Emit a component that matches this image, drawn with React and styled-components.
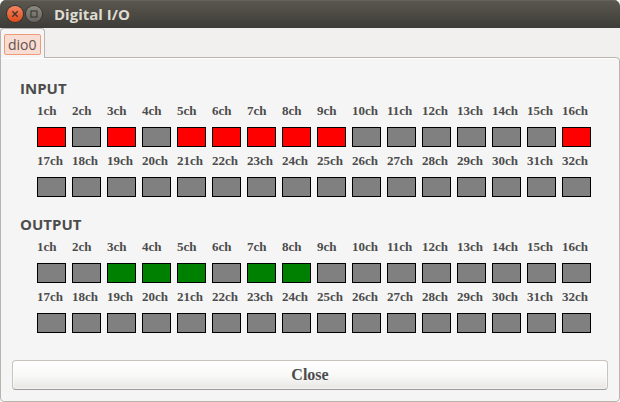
import React, { useState } from "react";
import styled, { createGlobalStyle } from "styled-components";

const GlobalStyle = createGlobalStyle`
  * { box-sizing: border-box; }
  body {
    margin: 0;
    background: #ffffff;
    color: #4c4c4c;
    font-family: "Open Sans", "Noto Sans", sans-serif;
  }
`;

const Window = styled.div`
  display: flex;
  flex-direction: column;
  min-height: 100vh;
  background: #f1f0ee;
  border-radius: 6px 6px 4px 4px;
  overflow: hidden;
`;

const TitleBar = styled.header`
  display: flex;
  align-items: center;
  gap: 3px;
  height: 28px;
  padding: 0 7px;
  background: linear-gradient(#5b584f, #3d3c38);
  box-shadow: inset 0 1px #656259;
`;

const WindowButton = styled.button`
  display: flex;
  width: 16px;
  height: 16px;
  padding: 0;
  border: 0;
  border-radius: 50%;
  background: ${(p) =>
    p.$kind === "close"
      ? "linear-gradient(#f58462, #df4b1a)"
      : "linear-gradient(#8b897f, #66645d)"};
  box-shadow: 0 0 0 1px #363530;
`;

const Title = styled.h1`
  margin: 0 0 0 9px;
  color: #dfdbd2;
  font-size: 15px;
  line-height: 20px;
  font-weight: 700;
`;

const TabStrip = styled.div`
  position: relative;
  z-index: 1;
  display: flex;
  margin-bottom: -1px;
`;

const Tab = styled.button`
  height: 30px;
  padding: 4px 3px 3px;
  border: 1px solid #b9b4ae;
  border-bottom: 0;
  border-radius: 4px 4px 0 0;
  background: #f5f5f5;
  color: #67504a;
  font: inherit;
`;

const TabLabel = styled.span`
  display: block;
  padding: 0 3px;
  border: 1px solid #f19a78;
  border-radius: 2px;
  background: #f7ddd3;
  font-size: 14px;
  line-height: 19px;
`;

const Panel = styled.main`
  flex: 1;
  display: flex;
  flex-direction: column;
  padding: 20px 11px 11px;
  border: 1px solid #b9b4ae;
  border-radius: 0 4px 4px 4px;
  background: #f5f5f5;
  box-shadow: inset 0 1px #ffffff;
`;

const Group = styled.section`
  padding: 0 17px 0 8px;
  margin-bottom: 17px;
`;

const GroupTitle = styled.h2`
  margin: 0 0 5px;
  font-size: 15px;
  line-height: 20px;
  font-weight: 700;
`;

const ChannelGrid = styled.ul`
  display: grid;
  grid-template-columns: repeat(16, minmax(0, 1fr));
  gap: 6px;
  margin: 0 0 0 17px;
  padding: 0;
  list-style: none;
`;

const Channel = styled.li`
  display: flex;
  flex-direction: column;
  gap: 8px;
  font: bold 13px/16px "Liberation Serif", serif;
  white-space: nowrap;
`;

const Lamp = styled.span`
  height: 20px;
  border: 1px solid #000000;
  background: ${(p) => p.$color};
`;

const CloseButton = styled.button`
  height: 30px;
  margin-top: auto;
  border: 1px solid #c8c3bd;
  border-bottom-color: #9b9b9b;
  border-radius: 4px;
  background: linear-gradient(#ffffff, #f9f9f8 50%, #e8e7e5);
  box-shadow: inset 0 0 0 1px #ffffff80;
  color: inherit;
  font: bold 16px/20px "Liberation Serif", serif;
`;

const CHANNELS = Array.from({ length: 32 }, (_, i) => i + 1);

const GROUPS = [
  { name: "INPUT", color: "#ff0000", active: [1, 3, 5, 6, 7, 8, 9, 16] },
  { name: "OUTPUT", color: "#008000", active: [3, 4, 5, 7, 8] },
];

function ChannelGroup({ name, color, active }) {
  return (
    <Group aria-label={name}>
      <GroupTitle>{name}</GroupTitle>
      <ChannelGrid>
        {CHANNELS.map((n) => {
          const on = active.includes(n);
          return (
            <Channel key={n}>
              {n}ch
              <Lamp role="img" aria-label={on ? "on" : "off"} $color={on ? color : "#808080"} />
            </Channel>
          );
        })}
      </ChannelGrid>
    </Group>
  );
}

export default function App() {
  const [open, setOpen] = useState(true);
  const close = () => setOpen(false);
  return (
    <>
      <GlobalStyle />
      {open && (
        <Window>
          <TitleBar>
            <WindowButton type="button" $kind="close" aria-label="Close window" onClick={close}>
              <svg width="16" height="16" viewBox="0 0 16 16">
                <path d="M5.3 5.3l5.4 5.4M10.7 5.3l-5.4 5.4" stroke="#45352d" strokeWidth="1.4" />
              </svg>
            </WindowButton>
            <WindowButton type="button" $kind="maximize" aria-label="Maximize window">
              <svg width="16" height="16" viewBox="0 0 16 16">
                <rect x="5" y="5" width="6" height="6" fill="none" stroke="#3c3b37" strokeWidth="1.2" />
              </svg>
            </WindowButton>
            <Title>Digital I/O</Title>
          </TitleBar>
          <TabStrip role="tablist">
            <Tab type="button" role="tab" id="tab-dio0" aria-selected="true" aria-controls="panel-dio0">
              <TabLabel>dio0</TabLabel>
            </Tab>
          </TabStrip>
          <Panel id="panel-dio0" role="tabpanel" aria-labelledby="tab-dio0">
            {GROUPS.map((group) => (
              <ChannelGroup key={group.name} {...group} />
            ))}
            <CloseButton type="button" onClick={close}>Close</CloseButton>
          </Panel>
        </Window>
      )}
    </>
  );
}
